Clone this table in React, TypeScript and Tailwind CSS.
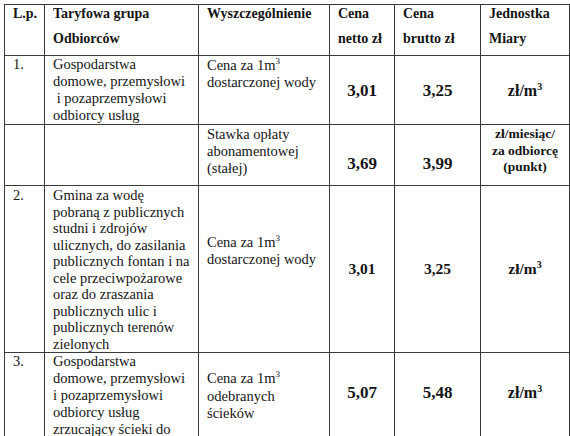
function Unit() {
  return (
    <span className="font-bold">
      zł/m<span className="relative -top-[6px] text-[10px] leading-none">3</span>
    </span>
  );
}

function M3() {
  return (
    <>
      1m<span className="relative -top-[6px] text-[9px] leading-none">3</span>
    </>
  );
}

const cell = "border border-[#3a3a3a] px-[8px] align-top";

export default function App() {
  return (
    <div className="h-[436px] w-[570px] overflow-hidden bg-white pl-[4px] pt-[4px] font-serif text-[#141414]">
      <table className="w-[565px] table-fixed border-collapse font-[Liberation_Serif,serif] text-[14.5px] text-[#141414]">
        <colgroup>
          <col className="w-[40px]" />
          <col className="w-[154px]" />
          <col className="w-[131px]" />
          <col className="w-[65px]" />
          <col className="w-[86px]" />
          <col className="w-[89px]" />
        </colgroup>
        <tbody>
          <tr className="h-[51px] text-[14px] font-bold">
            <td className={cell}>
              <div className="pt-[1px] leading-[16px]">L.p.</div>
            </td>
            <td className={cell}>
              <div className="flex flex-col gap-[9px] pt-[1px] leading-[16px]">
                <span>Taryfowa grupa</span>
                <span>Odbiorców</span>
              </div>
            </td>
            <td className={cell}>
              <div className="pt-[1px] leading-[16px]">Wyszczególnienie</div>
            </td>
            <td className={cell}>
              <div className="flex flex-col gap-[9px] pt-[1px] leading-[16px]">
                <span>Cena</span>
                <span>netto zł</span>
              </div>
            </td>
            <td className={cell}>
              <div className="flex flex-col gap-[9px] pt-[1px] leading-[16px]">
                <span>Cena</span>
                <span>brutto zł</span>
              </div>
            </td>
            <td className={cell}>
              <div className="flex flex-col gap-[9px] pt-[1px] leading-[16px]">
                <span>Jednostka</span>
                <span>Miary</span>
              </div>
            </td>
          </tr>

          <tr className="h-[68px] leading-[17px]">
            <td className={cell}>1.</td>
            <td className={cell}>
              Gospodarstwa
              <br />
              domowe, przemysłowi
              <br />
              &nbsp;i pozaprzemysłowi
              <br />
              odbiorcy usług
            </td>
            <td className={cell}>
              <div className="pt-[1px]">
                Cena za <M3 />
                <br />
                dostarczonej wody
              </div>
            </td>
            <td className={`${cell} !align-middle text-center text-[17px] font-bold`}>3,01</td>
            <td className={`${cell} !align-middle text-center text-[17px] font-bold`}>3,25</td>
            <td className={`${cell} !align-middle text-center text-[16px]`}>
              <Unit />
            </td>
          </tr>

          <tr className="h-[61px] leading-[17px]">
            <td className={cell}></td>
            <td className={cell}></td>
            <td className={cell}>
              <div className="pt-[1px]">
                Stawka opłaty
                <br />
                abonamentowej
                <br />
                (stałej)
              </div>
            </td>
            <td className={`${cell} text-center text-[17px] font-bold`}>
              <div className="pt-[29px] leading-[20px]">3,69</div>
            </td>
            <td className={`${cell} text-center text-[17px] font-bold`}>
              <div className="pt-[29px] leading-[20px]">3,99</div>
            </td>
            <td className={`${cell} text-center text-[13.5px] font-bold`}>
              <div className="pt-[1px] leading-[16.5px]">
                zł/miesiąc/
                <br />
                za odbiorcę
                <br />
                (punkt)
              </div>
            </td>
          </tr>

          <tr className="h-[167px] leading-[16.5px]">
            <td className={cell}>
              <div className="pt-[1px]">2.</div>
            </td>
            <td className={cell}>
              <div className="pt-[1px]">
                Gmina za wodę
                <br />
                pobraną z publicznych
                <br />
                studni i zdrojów
                <br />
                ulicznych, do zasilania
                <br />
                publicznych fontan i na
                <br />
                cele przeciwpożarowe
                <br />
                oraz do zraszania
                <br />
                publicznych ulic i
                <br />
                publicznych terenów
                <br />
                zielonych
              </div>
            </td>
            <td className={cell}>
              <div className="pt-[48px] leading-[17px]">
                Cena za <M3 />
                <br />
                dostarczonej wody
              </div>
            </td>
            <td className={`${cell} !align-middle text-center text-[15.5px] font-bold`}>3,01</td>
            <td className={`${cell} !align-middle text-center text-[15.5px] font-bold`}>3,25</td>
            <td className={`${cell} !align-middle text-center text-[15.5px]`}>
              <Unit />
            </td>
          </tr>

          <tr className="h-[100px] leading-[17px]">
            <td className={cell}>3.</td>
            <td className={cell}>
              Gospodarstwa
              <br />
              domowe, przemysłowi
              <br />
              i pozaprzemysłowi
              <br />
              odbiorcy usług
              <br />
              zrzucający ścieki do
            </td>
            <td className={cell}>
              <div className="pt-[17px] leading-[17.5px]">
                Cena za <M3 />
                <br />
                odebranych
                <br />
                ścieków
              </div>
            </td>
            <td className={`${cell} text-center text-[17px] font-bold`}>
              <div className="pt-[30px] leading-[20px]">5,07</div>
            </td>
            <td className={`${cell} text-center text-[17px] font-bold`}>
              <div className="pt-[30px] leading-[20px]">5,48</div>
            </td>
            <td className={`${cell} text-center text-[16px]`}>
              <div className="pt-[30px] leading-[20px]">
                <Unit />
              </div>
            </td>
          </tr>
        </tbody>
      </table>
    </div>
  );
}
